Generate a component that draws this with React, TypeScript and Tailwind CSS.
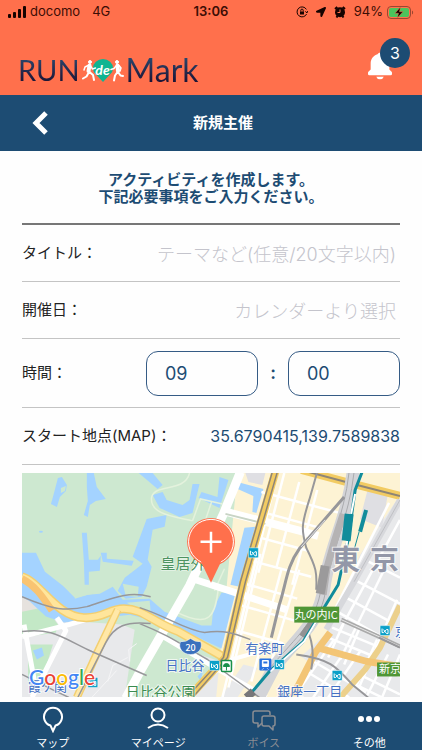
import React from "react";
import { BiSolidBell } from "react-icons/bi";
import { FaLocationArrow } from "react-icons/fa";

const MOATS = [
  "M58 478l4-1 5 8-1 6-6 6-3 10-6-3 2-7z",
  "M87 473h7l3 14 9 12-10 2-6 4-2 12-4-2 4-14-1-14z",
  "M82 533h5l2 27 9 0 3-4-1 15-11 1v20l-4-1-1-30z",
  "M101 553h6l0 6 27 2-2 5-29-4z",
  "M147 519l20-4-2 12-12 3-5 30 4 7-5 20-5 10-16 2-8-8 7-13 13-10 5-4-10-7z",
  "M22 553h14l9 19 18 14 12 12 13-3 12-1 13-7 10 13 27-1 15 13 37 14h10l2-18 8-15h14l-14 56-30-14-33-13-29-7-24 3-42 5-18-6-17-16-29-14z",
  "M139 473h14l10 12-5 4z",
  "M193 484h7l-7 29-13 4-20-9-7-13 10-3 4 8 16 5 7-5z",
  "M220 477l9 3-9 28-21-10 3-6 16 5z",
  "M238 482l26 7-7 24-4-1 1-16-18-8z",
  "M245 528l11-1-16 60-9-2z",
];

const PARKS = [
  "M75 585h35l-10 8-12 2-13 4z",
  "M123 584l16 3-1 10-12-1z",
];

const CITY_STREETS = [
  "M278 473l-55 225",
  "M285 473l-26 100",
  "M300 482l-23 86",
  "M318 490l-25 95",
  "M262 492l82 22",
  "M266 513l55 15",
  "M254 536l55 15",
  "M248 560l64 17",
  "M242 583l56 16",
  "M239 605l60 17",
  "M234 630l50 14",
  "M261 554l-32 134",
  "M282 570l-30 112",
  "M300 570l-28 92",
  "M401 520l-60 110",
  "M390 503l-56 110",
  "M366 560l35 18",
  "M355 580l46 24",
  "M347 598l46 25",
  "M338 612l46 26",
  "M333 628l46 19",
  "M329 638l46 19",
  "M344 625l-15 33",
  "M362 625l-17 40",
  "M378 640l-20 45",
  "M390 560l-49 100",
  "M398 600l-39 90",
  "M300 690l35-50",
  "M314 698l31-45",
  "M329 698l32-46",
  "M304 670l46 28",
  "M311 660l56 33",
  "M360 675l41 20",
  "M370 662l31 15",
  "M356 685l31 15",
  "M383 698l18-43",
  "M367 698l22-43",
];

const STATIONS = [
  [254, 553],
  [215, 666],
  [386, 631],
  [338, 676],
  [93, 683],
  [280, 665],
];

const TABS = [
  { label: "マップ", icon: "map", active: true },
  { label: "マイページ", icon: "user", active: true },
  { label: "ボイス", icon: "voice", active: false },
  { label: "その他", icon: "more", active: true },
];

/** Carrier, clock and battery line */
const StatusBar: React.FC = () => (
  <div className="grid h-6 grid-cols-[1fr_auto_1fr] items-center pl-2 pr-2 text-[13px] text-[#3b0d05]">
    <div className="flex items-center gap-1">
      <svg className="h-3 w-[18px]" viewBox="0 0 18 12" fill="#160300">
        <rect x="0" y="8" width="3" height="4" rx="1" />
        <rect x="5" y="6" width="3" height="6" rx="1" />
        <rect x="10" y="3" width="3" height="9" rx="1" />
        <rect x="15" y="0" width="3" height="12" rx="1" />
      </svg>
      <span>docomo</span>
      <span className="ml-2">4G</span>
    </div>
    <span className="font-semibold">13:06</span>
    <div className="flex items-center justify-end gap-1">
      <svg className="mr-1 h-3 w-3" viewBox="0 0 12 12" fill="none" stroke="#160300">
        <path d="M10.4 3.4A5 5 0 1 0 10.6 8M11.9 5l-1.1 2L9.500 5.300" />
        <path d="M4.800 5.500V4.300a1.200 1.200 0 0 1 2.400 0v1.200" />
        <rect x="4" y="5.500" width="4" height="3" fill="#160300" stroke="none" />
      </svg>
      <FaLocationArrow className="mr-1 h-[10px] w-[10px] text-[#160300]" />
      <svg className="mr-1 h-3 w-3" viewBox="0 0 12 12">
        <path d="M1 3L3.300 1M11 3L8.700 1M2.500 11.500l1-1.500M9.500 11.500l-1-1.500" stroke="#160300" strokeWidth="2" />
        <circle cx="6" cy="6.300" r="5" fill="#160300" />
        <path d="M6 3.500v3H3.500" fill="none" stroke="#ff704c" />
      </svg>
      <span>94%</span>
      <svg className="h-[13px] w-[27px]" viewBox="0 0 27 13">
        <rect x=".5" y=".5" width="23" height="12" rx="3.500" fill="none" stroke="#9b4630" />
        <rect x="2" y="2" width="20" height="9" rx="2" fill="#4bc45c" />
        <path d="M25 4.500c1.500.5 1.500 3.500 0 4z" fill="#9b4630" />
        <path d="M13.500 1L8 7.300h3.500L10.300 12 16 5.700h-3.500z" fill="#160300" stroke="#ff704c" strokeWidth=".5" />
      </svg>
    </div>
  </div>
);

/** Brand logo with the two runners */
const Logo: React.FC = () => (
  <div className="flex items-center font-['Lato',sans-serif] text-[29px] leading-7">
    <span className="bg-linear-to-b from-[#294b72] to-[#1b1030] bg-clip-text text-transparent">RUN</span>
    <div className="relative mx-[2px] flex h-6 w-[42px] items-center justify-center text-white">
      <svg className="absolute inset-0 h-6 w-[42px]" viewBox="0 0 42 24" fill="none" strokeLinecap="round" strokeLinejoin="round">
        <path d="M21 24L14 16.500a10 9 0 1 1 14 0z" fill="#0fb592" />
        <g stroke="#fff">
          <circle cx="8" cy="4" r="1.500" fill="#fff" />
          <path d="M7.500 7.500L6.500 13" strokeWidth="4" />
          <path d="M7 14l-2.500 4.500L1 20.500M7.500 14l3.500 3 1 5" strokeWidth="2" />
          <path d="M6 7.500L3 9l-1 3M8.500 8l2 3 3-1" strokeWidth="1.500" />
          <circle cx="35" cy="4" r="1.500" fill="#fff" />
          <path d="M35.500 7.500L36 13" strokeWidth="4" />
          <path d="M36 14l2.500 3.500 2.500.500M35.500 14L33 17.500l-1 5" strokeWidth="2" />
          <path d="M37 7.500l2 2.500-1 3M34 8l-2 2.500-3 1" strokeWidth="1.500" />
        </g>
      </svg>
      <span className="relative text-[14px] font-bold italic leading-4">de</span>
    </div>
    <span className="bg-linear-to-b from-[#294b72] to-[#1b1030] bg-clip-text text-[32px] text-transparent">Mark</span>
  </div>
);

/** Street map around the start point */
const StreetMap: React.FC = () => (
  <svg
    className="block w-full"
    viewBox="22 473 379 225"
    role="img"
    aria-label="スタート地点"
    fontFamily="'Noto Sans CJK JP', sans-serif"
  >
    {/* Ground */}
    <path d="M22 473h379v225H22z" fill="#e8e9eb" />
    <path d="M22 473h216l35 10-49 180-45-15-57-23-60-4-40-20z" fill="#cde8d0" />
    <path d="M238 473h163v22l-40 60-25 60-10 20-44 40-38-10-28 40z M278 640l35 25-20 33h-55z" fill="#fdf3d4" />
    <path d="M135 630l25 0 55 38-28 30h-62z" fill="#cde8d0" />
    <path d="M22 590l18 10 18 25-2 8-34 5z M28 645h25l-10 32-15 8z" fill="#c3e8c6" />
    <path d="M22 585l12 5 8 18-20 4z" fill="#e6e2de" />
    <path d="M246 473h20l-3 12-14-3zM369 488l20 5-6 35-22-9z" fill="#dfdfe3" />

    {/* Water and islands */}
    <g fill="#a4d3ff">
      {MOATS.map((d) => (
        <path key={d} d={d} />
      ))}
      <ellipse cx="41" cy="532" rx="2" ry="1" />
      <path d="M33 651l9-3 2 8-7 4zM198 677l6-7-3 11z" />
    </g>
    <path d="M61 488l5-2-1 5-4 2z" fill="#cde8d0" />
    <g fill="#cde8d0">
      {PARKS.map((d) => (
        <path key={d} d={d} />
      ))}
      <path d="M127 603l23-2 1 11-14-3z" />
    </g>

    {/* Garden paths */}
    <g fill="none" stroke="#e4f2dd" strokeWidth="1.500">
      <path d="M190 473c-5 20-34 10-38 24-3 18 25 20 41 24M193 521l8-22 22 5M206 520l6-18M176 612c35 18 40 4 43-25" />
      <path d="M225 569l-10 22" />
    </g>

    {/* City blocks */}
    <g fill="none" stroke="#fff" strokeWidth="2.500">
      {CITY_STREETS.map((d) => (
        <path key={d} d={d} />
      ))}
    </g>
    <g fill="none" stroke="#fff" strokeLinejoin="round">
      <path d="M241 472l-17 42-34 72-49 85-15 28" strokeWidth="9" />
      <path d="M223 511l78 20 18 5" strokeWidth="8" />
      <path d="M190 578l52 17 45 15" strokeWidth="7" />
      <path d="M22 637l47-12 30-9M57 618l9 13-34 67M24 625l12 65" strokeWidth="5" />
      <path d="M160 635l57 34 50 29" strokeWidth="5" />
      <path d="M180 700l52-40 43-12" strokeWidth="4" />
    </g>
    <path d="M226 514l40 10" stroke="#c8d4c5" strokeWidth="2" />
    <path d="M130 662l-1-12 8-6M108 682l5-16 15-8M92 698l25-27" fill="none" stroke="#f5f5f6" strokeWidth="1" />

    {/* Highways */}
    <g fill="none" strokeLinejoin="round">
      <path d="M22 577c19 6 34 40 62 41 20 1 25-9 40-9 20 0 29 14 55 23l44 25" stroke="#f3cf70" strokeWidth="9" />
      <path d="M22 577c19 6 34 40 62 41 20 1 25-9 40-9 20 0 29 14 55 23l44 25" stroke="#ffe59b" strokeWidth="6" />
      <path d="M22 579c12 6 20 17 30 32" stroke="#f9c472" strokeWidth="7" />
      <path d="M118 610l-21 44-20 44" stroke="#f3cf70" strokeWidth="8" />
      <path d="M118 610l-21 44-20 44" stroke="#ffe8a8" strokeWidth="5" />
      <path d="M276 472l-32 110-18 76-37 40" stroke="#f2cb62" strokeWidth="8" />
      <path d="M273 472l-32 110-17 76-37 40M278 472l-32 110-18 76-35 40" stroke="#8e8577" strokeWidth="1.500" />
      <path d="M302 470l56 15 43 11" stroke="#f2cb62" strokeWidth="8" />
      <path d="M302 470l56 15 43 11" stroke="#8e8577" strokeWidth="2" />
      <path d="M401 606l-20 42-15 22-25 28" stroke="#ecd08b" strokeWidth="6" />
      <path d="M331 633l-15 20-23 45M318 648l50 14 33 5" stroke="#f3c575" strokeWidth="7" />
    </g>

    {/* Railways */}
    <g fill="none" strokeLinejoin="round">
      <path d="M354 472c-5 45-25 80-29 115-4 35-25 50-50 80l-16 31" stroke="#d3d4d8" strokeWidth="13" />
      <path d="M350 472c-5 45-23 80-28 115-4 35-25 50-50 80" stroke="#aaabae" />
      <path d="M355 472c-5 45-23 80-28 115-4 35-25 50-50 80" stroke="#aaabae" />
      <path d="M344 514l-9 28-7 25-4 28" stroke="#b5b3b4" strokeWidth="7" />
      <path d="M326 566l-5 28" stroke="#9b9a9b" strokeWidth="9" />
      <path d="M303 637c8-12 15-20 22-28" stroke="#929294" strokeWidth="7" />
      <path d="M318 472l-8 28c-8 25-8 30-3 48 10 20 11 25 10 42" stroke="#97979a" strokeWidth="2" />
      <path d="M345 497l-45 52c-13 18-13 35-20 56l-8 33" stroke="#97979a" strokeWidth="3" />
      <path d="M326 520l-24 27" stroke="#e4e4e6" />
      <path d="M401 500l-46 82-28 48" stroke="#d7d8dc" strokeWidth="6" />
      <path d="M401 500l-46 82" stroke="#bfc0c4" />
      <path d="M22 597c30 13 45 15 65 10 25-8 40-16 64-10M22 632c30-4 40 6 70 20l55 24M22 675l32 16 15 7M140 624c30 12 40 20 68 36l52 38M78 698l28-55c8-16 20-22 45-19M140 608c30 10 45 22 65 25 20-3 30 1 46 7" stroke="#97979a" strokeWidth="1.500" />
      <path d="M342 620l40 18 19 9" stroke="#aaa" strokeWidth="4" />
      <path d="M342 620l40 18 19 9" stroke="#e5e5e5" strokeWidth="1" />
      <path d="M297 655c35 5 40 12 56 30l16 13M307 628c7 14 8 27 5 42M380 638l21 10" stroke="#97979a" strokeWidth="2" />
      <path d="M363 472l-7 18-7 50-10 45-35 57-34 30-22 26" stroke="#118c9b" strokeWidth="3" />
      <path d="M356 494l-4 20M348 541l-4 31M317 622l-12 20-34 30" stroke="#fff" strokeWidth="2" />
      <path d="M350 514l-3 27" stroke="#118c9b" strokeWidth="9" />
      <path d="M367 510l-6 22" stroke="#118c9b" strokeWidth="4" />
      <path d="M360 532l-5 18" stroke="#118c9b" strokeWidth="1" />
      <path d="M254 692l-7 6" stroke="#77777a" strokeWidth="8" />
    </g>

    {/* Place names */}
    <g stroke="#fff" strokeOpacity=".7" strokeWidth="2" paintOrder="stroke">
      <text x="161" y="569" fontSize="15" fill="#4d9360" strokeWidth="1">皇居外</text>
      <text x="332" y="570" fontSize="29" fontWeight="700" fill="#9397a8">東</text>
      <text x="371" y="570" fontSize="29" fontWeight="700" fill="#9397a8">京</text>
      <text x="166" y="671" fontSize="13" fill="#4471c4">日比谷</text>
      <text x="246" y="653" fontSize="13" fill="#4471c4">有楽町</text>
      <text x="278" y="697" fontSize="13" fill="#4471c4">銀座一丁目</text>
      <text x="396" y="636" fontSize="13" fill="#4471c4">京</text>
      <text x="28" y="692" fontSize="13" fill="#4471c4">霞ケ関</text>
      <text x="126" y="698" fontSize="14" fill="#3a8c50">日比谷公園</text>
    </g>

    {/* Signs */}
    <rect x="295" y="607" width="45" height="16" fill="#4f9636" />
    <text x="317" y="619" fontSize="11" textAnchor="middle" fill="#fff">丸の内IC</text>
    <rect x="378" y="663" width="26" height="14" fill="#4f9636" />
    <text x="380" y="674" fontSize="11" fill="#fff">新京橋</text>
    {STATIONS.map(([x, y]) => (
      <g key={`${x}-${y}`} transform={`translate(${x - 5} ${y - 5})`}>
        <rect x="0" y="0" width="10" height="10" rx="1" fill="#0aa0c8" stroke="#fff" strokeWidth=".5" />
        <path d="M2 3v4h1.500l3-3H8v4H6.500l-3-4" fill="none" stroke="#fff" strokeWidth="1" />
      </g>
    ))}
    <rect x="222" y="661" width="10" height="11" rx="1" fill="#fff" stroke="#19904a" strokeWidth="1.500" />
    <path d="M227 671v-4M224 667a3 3 0 1 1 6 0z" fill="#19904a" stroke="#19904a" />
    <rect x="260" y="659" width="12" height="12" rx="1" fill="#2770df" />
    <path d="M263 661h6v6h-6zM264 669l-1 1M268 669l1 1" fill="#fff" stroke="#fff" />
    <path d="M264 663h4" stroke="#2770df" strokeWidth="2" />
    <path d="M181 642q5 1 10-3 5 4 10 3c3 6-2 13-10 13s-13-7-10-13z" fill="#3b71bd" stroke="#fff" strokeWidth=".5" />
    <text x="191" y="651" fontSize="9" fontWeight="500" textAnchor="middle" fill="#fff">20</text>

    {/* Map provider */}
    <text x="29" y="686" fontSize="21" fontWeight="500" fontFamily="Lato, sans-serif" stroke="#fff" strokeWidth="2" paintOrder="stroke">
      <tspan fill="#4285f4">G</tspan><tspan fill="#ea4335">o</tspan><tspan fill="#fbbc05">o</tspan><tspan fill="#4285f4">g</tspan><tspan fill="#34a853">l</tspan><tspan fill="#ea4335">e</tspan>
    </text>

    {/* Start pin */}
    <circle cx="211.500" cy="542" r="24" fill="#ff704c" />
    <circle cx="211.500" cy="542" r="22.500" fill="none" stroke="#fff" strokeWidth="1" />
    <path d="M201 561h21l-10.500 22z" fill="#ff704c" />
    <path d="M201 542h21M211.500 532v21" stroke="#fff" strokeWidth="2.500" />
  </svg>
);

const TabIcon: React.FC<{ name: string }> = ({ name }) => (
  <svg className="h-7 w-7" viewBox="0 0 28 28" fill="none" stroke="currentColor" strokeWidth="2">
    {name === "map" && <path d="M11.500 20.500a9 9 0 1 1 5 0L14 26z" />}
    {name === "user" && (
      <>
        <circle cx="14" cy="10" r="6.500" />
        <path d="M4 23q10-7 20 0" />
      </>
    )}
    {name === "voice" && (
      <g strokeWidth="1.500" strokeLinejoin="round">
        <path d="M12 18l-4 4v-4H5q-2 0-2-2V8q0-2 2-2h13q2 0 2 2v2" />
        <path d="M14 11h9q2 0 2 2v6q0 2-2 2v4l-4-4h-5q-2 0-2-2v-6q0-2 2-2z" />
      </g>
    )}
    {name === "more" && (
      <g fill="currentColor" stroke="none">
        <circle cx="6" cy="14" r="3" />
        <circle cx="14" cy="14" r="3" />
        <circle cx="22" cy="14" r="3" />
      </g>
    )}
  </svg>
);

const App: React.FC = () => {
  return (
    <div className="flex min-h-screen flex-col bg-[#fefefe] font-['Inter','Noto_Sans_CJK_JP',sans-serif] text-[15px] text-[#222]">
      <header className="bg-[#ff704c]">
        <StatusBar />
        <div className="flex h-[71px] items-center justify-between pl-[18px] pr-3">
          <div className="mt-5">
            <Logo />
          </div>
          <button type="button" aria-label="お知らせ" className="relative h-11 w-[46px]">
            <BiSolidBell className="absolute bottom-0 left-0 h-8 w-8 text-white" />
            <span className="absolute right-0 top-0 flex h-[30px] w-[30px] items-center justify-center rounded-full bg-[#1d4c73] text-base text-white">
              3
            </span>
          </button>
        </div>
      </header>

      {/* Title bar */}
      <div className="flex h-14 items-center bg-[#1d4c73] px-7 text-white">
        <button type="button" aria-label="戻る" className="flex h-10 w-6 items-center justify-center">
          <svg className="h-6 w-4" viewBox="0 0 16 24" fill="none" stroke="currentColor" strokeWidth="5">
            <path d="M14 2L4 12l10 10" />
          </svg>
        </button>
        <h1 className="flex-1 text-center font-bold">新規主催</h1>
      </div>

      <main className="flex-1 px-[22px] pb-1">
        <p className="border-b-2 border-[#777] pb-[18px] pt-5 text-center font-bold leading-[17px] text-[#1d4c73]">
          アクティビティを作成します。
          <br />
          下記必要事項をご入力ください。
        </p>

        {/* Activity title */}
        <div className="flex h-[57px] items-center border-b border-[#c4c4c4]">
          <label htmlFor="title">タイトル：</label>
          <input
            id="title"
            placeholder="テーマなど(任意/20文字以内)"
            className="min-w-0 flex-1 pr-1 pt-1 text-right text-lg font-light outline-none placeholder:text-[#c4c4cc]"
          />
        </div>

        {/* Date */}
        <div className="flex h-[57px] items-center border-b border-[#c4c4c4]">
          <label htmlFor="date">開催日：</label>
          <input
            id="date"
            placeholder="カレンダーより選択"
            className="min-w-0 flex-1 pr-1 pt-1 text-right text-lg font-light outline-none placeholder:text-[#c4c4cc]"
          />
        </div>

        {/* Time */}
        <div className="flex h-[69px] items-center justify-between border-b border-[#c4c4c4]">
          <label htmlFor="hour">時間：</label>
          <div className="flex items-center text-lg text-[#1d4c73]">
            <input
              id="hour"
              defaultValue="09"
              className="h-[45px] w-28 rounded-xl border border-[#355b85] px-[18px] outline-none"
            />
            <span className="w-[30px] text-center font-semibold">:</span>
            <input
              aria-label="分"
              defaultValue="00"
              className="h-[45px] w-28 rounded-xl border border-[#355b85] px-[18px] outline-none"
            />
          </div>
        </div>

        {/* Start point */}
        <div className="mb-2 flex h-[57px] items-center justify-between border-b border-[#c4c4c4]">
          <span>スタート地点(MAP)：</span>
          <span className="text-base text-[#1d4c73]">35.6790415,139.7589838</span>
        </div>
        <StreetMap />
      </main>

      <nav className="grid h-12 grid-cols-4 bg-[#1d4c73] text-[11px]">
        {TABS.map((tab) => (
          <a
            key={tab.label}
            href="#"
            className={`flex flex-col items-center gap-[2px] pt-[3px] leading-4 ${tab.active ? "text-white" : "text-[#8b8d93]"}`}
          >
            <TabIcon name={tab.icon} />
            <span>{tab.label}</span>
          </a>
        ))}
      </nav>
    </div>
  );
};

export default App;
